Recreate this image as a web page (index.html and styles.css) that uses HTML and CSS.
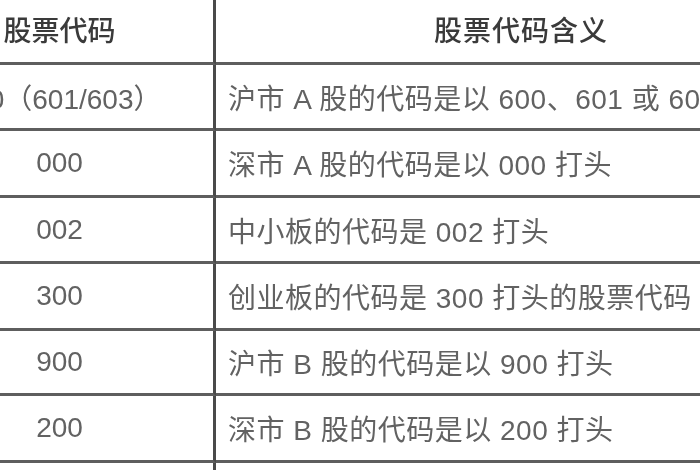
FILE: index.html
```html
<!DOCTYPE html>
<html lang="zh-CN">
<head>
<meta charset="utf-8">
<title>股票代码</title>
<link rel="stylesheet" href="styles.css">
</head>
<body>
<div class="table">
  <div class="cell code head">股票代码</div>
  <div class="cell desc head center">股票代码含义</div>

  <div class="cell code">600（601/603）</div>
  <div class="cell desc">沪市 A 股的代码是以 600、601 或 603 打头</div>

  <div class="cell code">000</div>
  <div class="cell desc">深市 A 股的代码是以 000 打头</div>

  <div class="cell code">002</div>
  <div class="cell desc">中小板的代码是 002 打头</div>

  <div class="cell code">300</div>
  <div class="cell desc">创业板的代码是 300 打头的股票代码</div>

  <div class="cell code">900</div>
  <div class="cell desc">沪市 B 股的代码是以 900 打头</div>

  <div class="cell code">200</div>
  <div class="cell desc">深市 B 股的代码是以 200 打头</div>

  <div class="cell code"></div>
  <div class="cell desc"></div>
</div>
</body>
</html>
```

FILE: styles.css
```css
html, body {
  margin: 0;
  padding: 0;
  background: #ffffff;
  width: 700px;
  height: 470px;
  overflow: hidden;
}

.table {
  display: grid;
  grid-template-columns: 310px 610px;
  grid-template-rows: 65px 66px 67px 66px 67px 65px 67px 60px;
  margin-left: -94px;
  font-family: "Liberation Sans", "Noto Sans CJK SC", sans-serif;
  font-size: 28px;
  color: #626262;
  filter: blur(0.35px);
}

.cell {
  display: flex;
  align-items: center;
  box-sizing: border-box;
  border-bottom: 3px solid #5e5e5e;
  white-space: nowrap;
  overflow: hidden;
}

.code {
  justify-content: center;
  border-right: 3px solid #4a4a4a;
}

.desc {
  padding-left: 12px;
  letter-spacing: 0.5px;
}

.head {
  color: #3a3a3a;
  font-weight: 500;
  padding-bottom: 4px;
}

.center {
  justify-content: center;
  padding-left: 0;
  letter-spacing: 1px;
}
```
